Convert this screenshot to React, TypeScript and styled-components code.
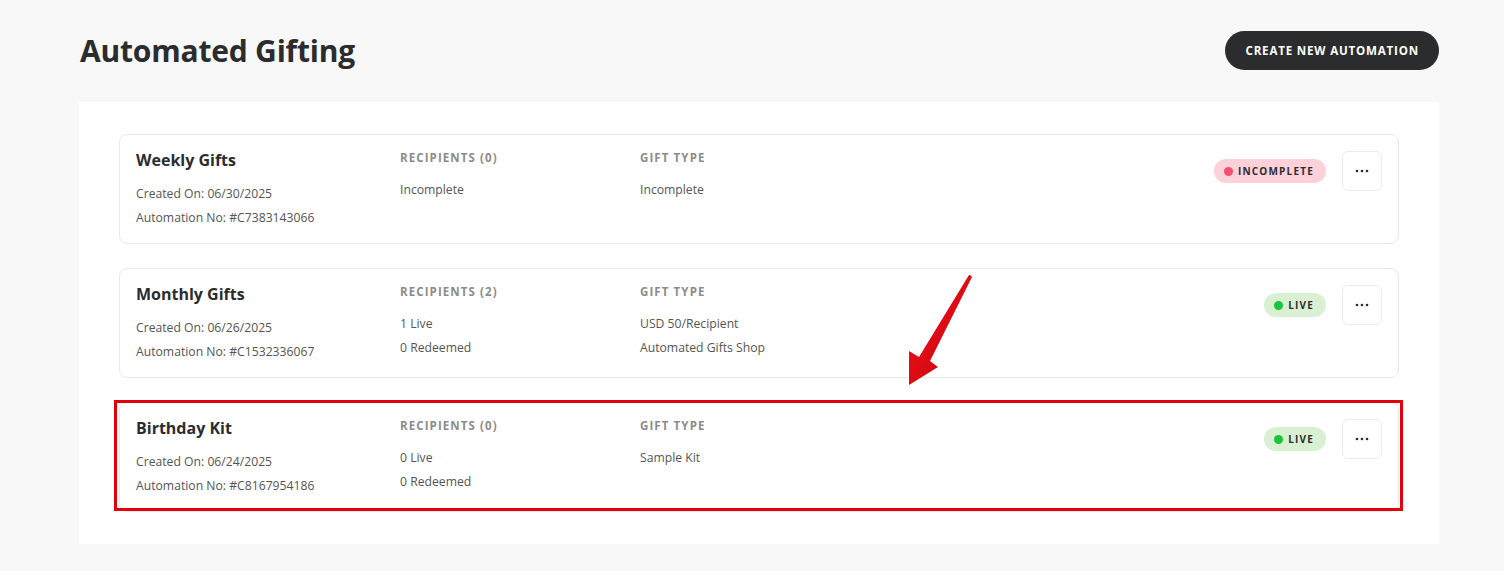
import React from "react";
import styled, { createGlobalStyle } from "styled-components";

type Status = "incomplete" | "live";

type Automation = {
  name: string;
  created: string;
  number: string;
  recipientsCount: number;
  recipients: string[];
  gift: string[];
  status: Status;
  highlighted?: boolean;
};

const automations: Automation[] = [
  {
    name: "Weekly Gifts",
    created: "06/30/2025",
    number: "#C7383143066",
    recipientsCount: 0,
    recipients: ["Incomplete"],
    gift: ["Incomplete"],
    status: "incomplete",
  },
  {
    name: "Monthly Gifts",
    created: "06/26/2025",
    number: "#C1532336067",
    recipientsCount: 2,
    recipients: ["1 Live", "0 Redeemed"],
    gift: ["USD 50/Recipient", "Automated Gifts Shop"],
    status: "live",
  },
  {
    name: "Birthday Kit",
    created: "06/24/2025",
    number: "#C8167954186",
    recipientsCount: 0,
    recipients: ["0 Live", "0 Redeemed"],
    gift: ["Sample Kit"],
    status: "live",
    highlighted: true,
  },
];

const App = () => {
  return (
    <>
      <GlobalStyle />
      <Page>
        <Header>
          <Title>Automated Gifting</Title>
          <PrimaryButton type="button">Create New Automation</PrimaryButton>
        </Header>
        <Panel>
          {automations.map((a) => (
            <Card key={a.number}>
              <InfoCol>
                <Name>{a.name}</Name>
                <Meta>Created On: {a.created}</Meta>
                <Meta>Automation No: {a.number}</Meta>
              </InfoCol>
              <DataCol $width={240}>
                <Label>Recipients ({a.recipientsCount})</Label>
                {a.recipients.map((r) => (
                  <Value key={r}>{r}</Value>
                ))}
              </DataCol>
              <DataCol $width={300}>
                <Label>Gift Type</Label>
                {a.gift.map((g) => (
                  <Value key={g}>{g}</Value>
                ))}
              </DataCol>
              <Actions>
                <Badge $status={a.status}>
                  <Dot $status={a.status} />
                  {a.status === "live" ? "Live" : "Incomplete"}
                </Badge>
                <MenuButton type="button" aria-label="More">
                  <svg width="14" height="4" viewBox="0 0 14 4">
                    <circle cx="2" cy="2" r="1.3" fill="#2b2c2e" />
                    <circle cx="7" cy="2" r="1.3" fill="#2b2c2e" />
                    <circle cx="12" cy="2" r="1.3" fill="#2b2c2e" />
                  </svg>
                </MenuButton>
              </Actions>
              {a.highlighted && <Highlight />}
            </Card>
          ))}
          <Arrow width="100" height="140" viewBox="0 0 100 140">
            <defs>
              <linearGradient id="arrowFill" x1="0" y1="0" x2="1" y2="1">
                <stop offset="0" stopColor="#f2161f" />
                <stop offset="1" stopColor="#c80008" />
              </linearGradient>
            </defs>
            <path
              d="M90 15 L92 17 L50 101 L58 107 L29 125 L29 91 L39 97 L89 15 Z"
              fill="url(#arrowFill)"
            />
          </Arrow>
        </Panel>
      </Page>
    </>
  );
};

export default App;

const GlobalStyle = createGlobalStyle`
  html, body {
    margin: 0;
    padding: 0;
    background: #f8f8f8;
  }
  body {
    font-family: "Open Sans", "Noto Sans", Arial, sans-serif;
    color: #2b2c2e;
  }
`;

const Page = styled.div`
  width: 1504px;
  min-height: 571px;
  padding: 0 65px 28px 79px;
  box-sizing: border-box;
`;

const Header = styled.div`
  display: flex;
  align-items: center;
  justify-content: space-between;
  height: 102px;
  padding-bottom: 2px;
  box-sizing: border-box;
`;

const Title = styled.h1`
  margin: 0 0 0 1px;
  font-size: 30px;
  font-weight: 700;
  letter-spacing: -0.2px;
  color: #2b2c2e;
`;

const PrimaryButton = styled.button`
  height: 39px;
  padding: 0 20px;
  border: none;
  border-radius: 20px;
  background: #2b2c2e;
  color: #fff;
  font-family: inherit;
  font-size: 11.6px;
  font-weight: 700;
  letter-spacing: 0.8px;
  text-transform: uppercase;
  cursor: pointer;
`;

const Panel = styled.div`
  position: relative;
  background: #fff;
  padding: 32px 40px 32px;
  display: flex;
  flex-direction: column;
  gap: 24px;
`;

const Card = styled.div`
  position: relative;
  display: flex;
  height: 110px;
  box-sizing: border-box;
  padding: 16px;
  border: 1px solid #e9e9e9;
  border-radius: 8px;
  background: #fff;
`;

const InfoCol = styled.div`
  width: 264px;
  display: flex;
  flex-direction: column;
`;

const Name = styled.div`
  font-size: 16px;
  font-weight: 700;
  color: #2b2c2e;
  line-height: 22px;
  margin-top: -2px;
  margin-bottom: 11px;
`;

const Meta = styled.div`
  font-size: 12.2px;
  line-height: 24px;
  color: #555;
`;

const DataCol = styled.div<{ $width: number }>`
  width: ${(p) => p.$width}px;
  display: flex;
  flex-direction: column;
`;

const Label = styled.div`
  font-size: 11.5px;
  font-weight: 700;
  letter-spacing: 1.1px;
  text-transform: uppercase;
  color: #8c8c8c;
  line-height: 18px;
  margin-top: -2px;
  margin-bottom: 11px;
`;

const Value = styled.div`
  font-size: 12.2px;
  line-height: 24px;
  color: #555;
`;

const Actions = styled.div`
  margin-left: auto;
  display: flex;
  align-items: flex-start;
  gap: 16px;
`;

const Badge = styled.div<{ $status: Status }>`
  margin-top: 8px;
  height: 24px;
  padding: 0 12px 0 10px;
  display: flex;
  align-items: center;
  gap: 5px;
  border-radius: 12px;
  background: ${(p) => (p.$status === "live" ? "#d9f1d2" : "#fdd1da")};
  font-size: 10px;
  font-weight: 700;
  letter-spacing: 1.2px;
  text-transform: uppercase;
  color: #2b2c2e;
`;

const Dot = styled.span<{ $status: Status }>`
  width: 9px;
  height: 9px;
  border-radius: 50%;
  background: ${(p) => (p.$status === "live" ? "#1cc43b" : "#f2506f")};
`;

const MenuButton = styled.button`
  width: 40px;
  height: 40px;
  border: 1px solid #ececec;
  border-radius: 6px;
  background: #fff;
  display: flex;
  align-items: center;
  justify-content: center;
  padding: 0;
  cursor: pointer;
`;

const Highlight = styled.div`
  position: absolute;
  top: -3px;
  left: -6px;
  right: -5px;
  bottom: 0;
  border: 3px solid #e2000b;
  pointer-events: none;
`;

const Arrow = styled.svg`
  position: absolute;
  left: 801px;
  top: 158px;
  pointer-events: none;
`;
